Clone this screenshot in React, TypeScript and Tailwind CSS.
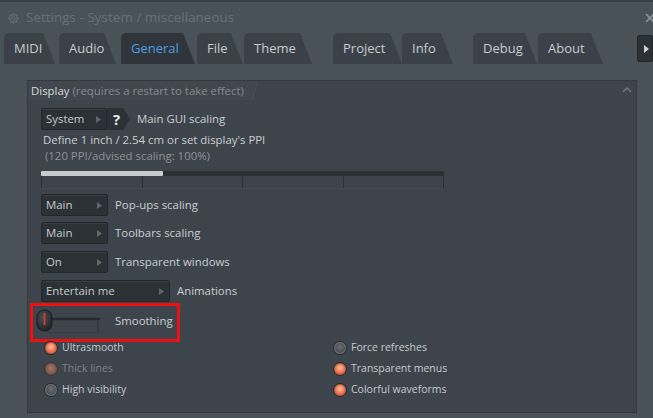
import React from "react";

const Arrow = () => (
  <svg width="5" height="7" viewBox="0 0 5 7" className="shrink-0">
    <path d="M0 0 L5 3.5 L0 7 Z" fill="#5f666d" />
  </svg>
);

const Combo = ({ label, className }: { label: string; className: string }) => (
  <div
    className={`flex h-[22px] items-center justify-between rounded-[2px] border border-[#23272b] bg-[#2c3136] pl-[4px] pr-[5px] text-[#c5cad0] shadow-[inset_0_1px_0_rgba(255,255,255,0.06)] ${className}`}
  >
    <span>{label}</span>
    <Arrow />
  </div>
);

const Radio = ({ on, dim, label }: { on: boolean; dim?: boolean; label: string }) => (
  <div className={`flex h-[21px] items-center gap-[4px] ${dim ? "opacity-45" : ""}`}>
    <div
      className={`flex h-[14px] w-[14px] items-center justify-center rounded-full border border-[#23272b] ${
        on ? "bg-[#b0634a]" : "bg-[#70757a]"
      }`}
    >
      <div
        className={`h-[10px] w-[10px] rounded-full ${
          on
            ? "bg-[radial-gradient(circle_at_50%_40%,#ffc0a4,#f5764f_55%,#dc5535)]"
            : "bg-[radial-gradient(circle_at_50%_40%,#696e72,#4a4f53_70%)]"
        }`}
      />
    </div>
    <span className="text-[10.5px] text-[#c5cad0]">{label}</span>
  </div>
);

const tabs: { label: string; cls: string; active?: boolean }[] = [
  { label: "MIDI", cls: "ml-[4px] w-[51px]" },
  { label: "Audio", cls: "ml-[4px] w-[57px]" },
  { label: "General", cls: "ml-[5px] w-[74px]", active: true },
  { label: "File", cls: "ml-[2px] w-[46px]" },
  { label: "Theme", cls: "ml-[1px] w-[68px]" },
  { label: "Project", cls: "ml-[21px] w-[69px]" },
  { label: "Info", cls: "ml-[0px] w-[51px]" },
  { label: "Debug", cls: "ml-[20px] w-[64px]" },
  { label: "About", cls: "ml-[1px] w-[65px]" },
];

export default function App() {
  return (
    <div className="relative h-[418px] w-[653px] overflow-hidden bg-[#4a5259] font-['Open_Sans',sans-serif] text-[11.4px] leading-none">
      {/* Title bar */}
      <div className="flex h-[33px] items-center border-t-2 border-[#3a4047] pl-[7px]">
        <svg width="13" height="13" viewBox="0 0 24 24" fill="none" stroke="#626a72" strokeWidth="2.4" className="mt-[1px]">
          <circle cx="12" cy="12" r="3" />
          <path d="M12 2v3M12 19v3M2 12h3M19 12h3M4.9 4.9l2.1 2.1M17 17l2.1 2.1M4.9 19.1 7 17M17 7l2.1-2.1" />
          <circle cx="12" cy="12" r="7" />
        </svg>
        <span className="ml-[6px] text-[13.5px] text-[#66707a]">Settings - System / miscellaneous</span>
        <svg width="10" height="10" viewBox="0 0 10 10" className="ml-auto mr-[-2px] mt-[1px]">
          <path d="M1 1 L9 9 M9 1 L1 9" stroke="#8d949a" strokeWidth="1.6" />
        </svg>
      </div>
      {/* Tabs */}
      <div className="flex h-[31px] items-end">
        {tabs.map((t) => (
          <div
            key={t.label}
            className={`flex h-[31px] shrink-0 items-center rounded-tl-[5px] pl-[10px] text-[13px] [clip-path:polygon(0_0,calc(100%-12px)_0,100%_100%,0_100%)] ${
              t.active ? "bg-[#2f353b] text-[#4d9fe3]" : "bg-[#3b4148] text-[#c6cbd0]"
            } ${t.cls}`}
          >
            {t.label}
          </div>
        ))}
        <div className="mb-[2px] ml-auto flex h-[27px] w-[16px] shrink-0 items-center rounded-[2px] border border-[#22262a] bg-[#2c3136] pl-[6px]">
          <svg width="5" height="8" viewBox="0 0 5 8">
            <path d="M0 0 L5 4 L0 8 Z" fill="#d0d4d8" />
          </svg>
        </div>
      </div>
      {/* Body */}
      <div className="pl-[27px] pr-[16px] pt-[16px]">
        <div className="h-[333px] border border-[#33393f] bg-[#3d444b]">
          {/* Group header */}
          <div className="flex h-[19px] items-center">
            <div className="flex h-full items-center bg-[#40474e] pl-[3px] pr-[14px] [clip-path:polygon(0_0,100%_0,calc(100%-6px)_100%,0_100%)]">
              <span className="text-[#d5d9dc]">Display</span>
              <span className="ml-[3px] text-[#858c93]">(requires a restart to take effect)</span>
            </div>
            <svg width="8" height="19" viewBox="0 0 8 19" className="-ml-[7px]">
              <path d="M6.5 0 L1 19" stroke="#565d64" strokeWidth="1" />
            </svg>
            <svg width="10" height="6" viewBox="0 0 10 6" className="ml-auto mr-[4px] mt-[-2px]">
              <path d="M1 5 L5 1 L9 5" stroke="#70777e" strokeWidth="1.5" fill="none" />
            </svg>
          </div>
          {/* Content */}
          <div className="flex flex-col pl-[13px] pt-[8px]">
            <div className="flex h-[22px] items-center">
              <Combo label="System" className="w-[66px]" />
              <div className="flex h-[22px] w-[23px] items-center bg-[#2c3136] pl-[6px] text-[15px] font-bold text-[#e6e9ec] [clip-path:polygon(0_0,70%_0,100%_50%,70%_100%,0_100%)]">
                ?
              </div>
              <span className="ml-[7px] text-[#c9ced3]">Main GUI scaling</span>
            </div>
            <div className="mt-[2px] pl-[2px] leading-[16px] text-[#c9ced3]">Define 1 inch / 2.54 cm or set display's PPI</div>
            <div className="pl-[4px] leading-[16px] text-[#8d9399]">(120 PPI/advised scaling: 100%)</div>
            <div className="mt-[7px] h-[5px] w-[403px] rounded-[1px] bg-[#2b3035]">
              <div className="h-[5px] w-[122px] rounded-[1px] bg-[#c8ccd0]" />
            </div>
            <div className="flex h-[13px] w-[403px] justify-between border-b border-[#41484f]">
              <div className="w-px bg-[#2c3136]" />
              <div className="w-px bg-[#2c3136]" />
              <div className="w-px bg-[#2c3136]" />
              <div className="w-px bg-[#2c3136]" />
              <div className="w-px bg-[#2c3136]" />
            </div>
            <div className="mt-[5px] flex h-[22px] items-center">
              <Combo label="Main" className="w-[67px]" />
              <span className="ml-[7px] text-[#c9ced3]">Pop-ups scaling</span>
            </div>
            <div className="mt-[6px] flex h-[22px] items-center">
              <Combo label="Main" className="w-[67px]" />
              <span className="ml-[7px] text-[#c9ced3]">Toolbars scaling</span>
            </div>
            <div className="mt-[7px] flex h-[22px] items-center">
              <Combo label="On" className="w-[67px]" />
              <span className="ml-[7px] text-[#c9ced3]">Transparent windows</span>
            </div>
            <div className="mt-[7px] flex h-[22px] items-center">
              <Combo label="Entertain me" className="w-[129px]" />
              <span className="ml-[7px] text-[#c9ced3]">Animations</span>
            </div>
            {/* Smoothing with red highlight */}
            <div className="-ml-[11px] mt-[1px] flex h-[39px] w-[150px] items-center border-[3px] border-[#ee1010] pb-[4px] pl-[3px]">
              <svg width="70" height="26" viewBox="0 0 70 26" className="mt-[3px]">
                <defs>
                  <radialGradient id="kn" cx="40%" cy="35%" r="70%">
                    <stop offset="0%" stopColor="#4a5056" />
                    <stop offset="100%" stopColor="#1e2226" />
                  </radialGradient>
                </defs>
                <line x1="10" y1="10" x2="64" y2="10" stroke="#272b2f" strokeWidth="2.5" />
                <line x1="62" y1="12" x2="62" y2="24" stroke="#2a2e32" strokeWidth="1" />
                {[16, 20, 24, 28, 32, 36, 40, 44, 48, 52, 56].map((x) => (
                  <line key={x} x1={x} y1="21" x2={x} y2="24" stroke="#454b51" strokeWidth="1" />
                ))}
                <line x1="12" y1="23.5" x2="60" y2="23.5" stroke="#373d43" strokeWidth="1" />
                <rect x="1" y="1" width="15" height="21" rx="7" fill="url(#kn)" stroke="#1b1e21" />
                <line x1="8.5" y1="4" x2="8.5" y2="16" stroke="#e23a2c" strokeWidth="1.6" />
              </svg>
              <span className="ml-[9px] text-[#c9ced3]">Smoothing</span>
            </div>
            {/* Radios */}
            <div className="ml-[3px] mt-[-5px] flex">
              <div className="flex w-[289px] flex-col">
                <Radio on label="Ultrasmooth" />
                <Radio on dim label="Thick lines" />
                <Radio on={false} label="High visibility" />
              </div>
              <div className="flex flex-col">
                <Radio on={false} label="Force refreshes" />
                <Radio on label="Transparent menus" />
                <Radio on label="Colorful waveforms" />
              </div>
            </div>
          </div>
        </div>
      </div>
    </div>
  );
}
